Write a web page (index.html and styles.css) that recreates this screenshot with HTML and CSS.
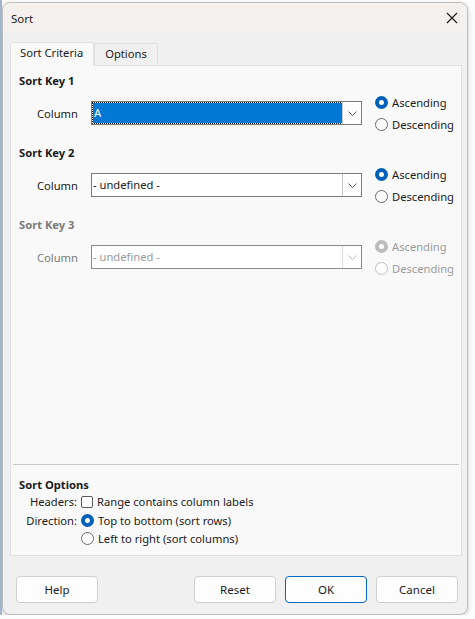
FILE: index.html
```html
<!DOCTYPE html>
<html lang="en">
<head>
  <meta charset="UTF-8">
  <meta name="viewport" content="width=device-width, initial-scale=1.0">
  <title>Sort</title>
  <link rel="stylesheet" href="styles.css">
</head>
<body>

  <!-- Dialog window -->
  <div class="dialog">
    <div class="titlebar">
      <span class="title">Sort</span>
      <svg class="close" width="12" height="12" viewBox="0 0 12 12">
        <path d="M1 1 L11 11 M11 1 L1 11" stroke="#1a1a1a" stroke-width="1.1" fill="none"/>
      </svg>
    </div>

    <div class="body">
      <!-- Tabs -->
      <div class="tabs">
        <div class="tab active">Sort Criteria</div>
        <div class="tab">Options</div>
      </div>

      <div class="panel">
        <div class="keys">
          <div class="key">
            <div class="key-title">Sort Key 1</div>
            <div class="key-row">
              <span class="col-label">Column</span>
              <div class="combo">
                <div class="combo-text selected">A</div>
                <div class="combo-btn"><svg width="9" height="5" viewBox="0 0 9 5"><path d="M0.5 0.5 L4.5 4.5 L8.5 0.5" stroke="#606060" fill="none"/></svg></div>
              </div>
              <div class="radios">
                <label class="opt"><span class="radio on"></span>Ascending</label>
                <label class="opt"><span class="radio"></span>Descending</label>
              </div>
            </div>
          </div>

          <div class="key">
            <div class="key-title">Sort Key 2</div>
            <div class="key-row">
              <span class="col-label">Column</span>
              <div class="combo">
                <div class="combo-text">- undefined -</div>
                <div class="combo-btn"><svg width="9" height="5" viewBox="0 0 9 5"><path d="M0.5 0.5 L4.5 4.5 L8.5 0.5" stroke="#606060" fill="none"/></svg></div>
              </div>
              <div class="radios">
                <label class="opt"><span class="radio on"></span>Ascending</label>
                <label class="opt"><span class="radio"></span>Descending</label>
              </div>
            </div>
          </div>

          <div class="key disabled">
            <div class="key-title">Sort Key 3</div>
            <div class="key-row">
              <span class="col-label">Column</span>
              <div class="combo">
                <div class="combo-text">- undefined -</div>
                <div class="combo-btn"><svg width="9" height="5" viewBox="0 0 9 5"><path d="M0.5 0.5 L4.5 4.5 L8.5 0.5" stroke="#b8b8b8" fill="none"/></svg></div>
              </div>
              <div class="radios">
                <label class="opt"><span class="radio on"></span>Ascending</label>
                <label class="opt"><span class="radio"></span>Descending</label>
              </div>
            </div>
          </div>
        </div>

        <!-- Sort options -->
        <div class="options">
          <div class="key-title">Sort Options</div>
          <div class="opt-row">
            <span class="opt-label">Headers:</span>
            <span class="check"></span>Range contains column labels
          </div>
          <div class="opt-row">
            <span class="opt-label">Direction:</span>
            <span class="radio on"></span>Top to bottom (sort rows)
          </div>
          <div class="opt-row">
            <span class="opt-label"></span>
            <span class="radio"></span>Left to right (sort columns)
          </div>
        </div>
      </div>

      <!-- Buttons -->
      <div class="buttons">
        <button class="btn">Help</button>
        <div class="spacer"></div>
        <button class="btn">Reset</button>
        <button class="btn default">OK</button>
        <button class="btn">Cancel</button>
      </div>
    </div>
  </div>

</body>
</html>
```

FILE: styles.css
```css
* {
  margin: 0;
  padding: 0;
  box-sizing: border-box;
  font-family: 'Noto Sans', 'Open Sans', sans-serif;
}

body {
  background: #ffffff;
  border-left: 2px solid #9fb6cc;
  color: #1a1a1a;
  font-size: 11.2px;
  overflow: hidden;
}

.dialog {
  width: 466px;
  height: 613px;
  margin-top: 2px;
  background: #f0f0f0;
  border: 1px solid #bdbdbd;
  border-radius: 8px;
  box-shadow: 0 2px 6px rgba(0, 0, 0, 0.2);
  display: flex;
  flex-direction: column;
  overflow: hidden;
}

.titlebar {
  height: 30px;
  flex: none;
  background: #f3f0ed;
  display: flex;
  align-items: center;
  justify-content: space-between;
  padding: 0 9px 0 8px;
}

.title {
  font-size: 11.5px;
}

.close {
  display: block;
}

.body {
  flex: 1;
  display: flex;
  flex-direction: column;
  padding: 9px 5px 12px 7px;
}

.tabs {
  display: flex;
  align-items: flex-end;
  height: 23px;
}

.tab {
  height: 22px;
  padding: 0 10px;
  line-height: 20px;
  border: 1px solid #e0e0e0;
  border-bottom: none;
  background: #f0f0f0;
}

.tab.active {
  height: 24px;
  margin-bottom: -1px;
  background: #f9f9f9;
  position: relative;
  z-index: 1;
  padding: 0 10px 0 9px;
}

.panel {
  height: 491px;
  background: #f9f9f9;
  border: 1px solid #e0e0e0;
  display: flex;
  flex-direction: column;
}

.keys {
  flex: 1;
  padding: 7px 0 0 8px;
  display: flex;
  flex-direction: column;
  gap: 10px;
}

.key-title {
  font-weight: bold;
  height: 16px;
  line-height: 16px;
}

.key-row {
  display: flex;
  align-items: center;
  margin-top: 2px;
  height: 44px;
}

.col-label {
  width: 59px;
  text-align: right;
  margin-right: 13px;
}

.combo {
  width: 271px;
  height: 24px;
  background: #ffffff;
  border: 1px solid #7a7a7a;
  display: flex;
}

.combo-text {
  flex: 1;
  padding-left: 1px;
  line-height: 21px;
}

.combo-text.selected {
  margin: 1px 0 1px 1px;
  background: #0078d4;
  color: #ffffff;
  outline: 1px dotted #1a1a1a;
  line-height: 20px;
}

.combo-btn {
  width: 19px;
  border-left: 1px solid #c8c8c8;
  display: flex;
  align-items: center;
  justify-content: center;
}

.radios {
  margin-left: 13px;
  display: flex;
  flex-direction: column;
  gap: 4px;
}

.opt {
  display: flex;
  align-items: center;
  height: 18px;
}

.radio {
  width: 13px;
  height: 13px;
  border-radius: 50%;
  border: 1px solid #6a6a6a;
  background: #ffffff;
  margin-right: 4px;
  flex: none;
}

.radio.on {
  border: 4px solid #005fb8;
}

.disabled .key-title,
.disabled .col-label {
  color: #7a7a7a;
}

.disabled .combo-text,
.disabled .opt {
  color: #9a9a9a;
}

.disabled .combo {
  border-color: #8a8a8a;
}

.disabled .combo-btn {
  border-left-color: #e0e0e0;
}

.disabled .radio {
  border-color: #c0c0c0;
}

.disabled .radio.on {
  border-color: #bcbcbc;
}

.options {
  margin: 0 2px;
  border-top: 1px solid #c8c8c8;
  padding: 12px 0 7px 6px;
}

.opt-row {
  display: flex;
  align-items: center;
  height: 18.5px;
}

.opt-label {
  width: 58px;
  text-align: right;
  margin-right: 4px;
}

.check {
  width: 12px;
  height: 12px;
  border: 1px solid #5a5a5a;
  border-radius: 2px;
  background: #ffffff;
  margin-right: 4px;
}

.buttons {
  display: flex;
  gap: 9px;
  margin-top: 20px;
  padding: 0 4px 0 6px;
}

.spacer {
  flex: 1;
}

.btn {
  width: 82px;
  height: 27px;
  background: #fdfdfd;
  border: 1px solid #d0d0d0;
  border-radius: 4px;
  font-size: 11.5px;
  color: #1a1a1a;
}

.btn.default {
  border-color: #0067c0;
}
```
